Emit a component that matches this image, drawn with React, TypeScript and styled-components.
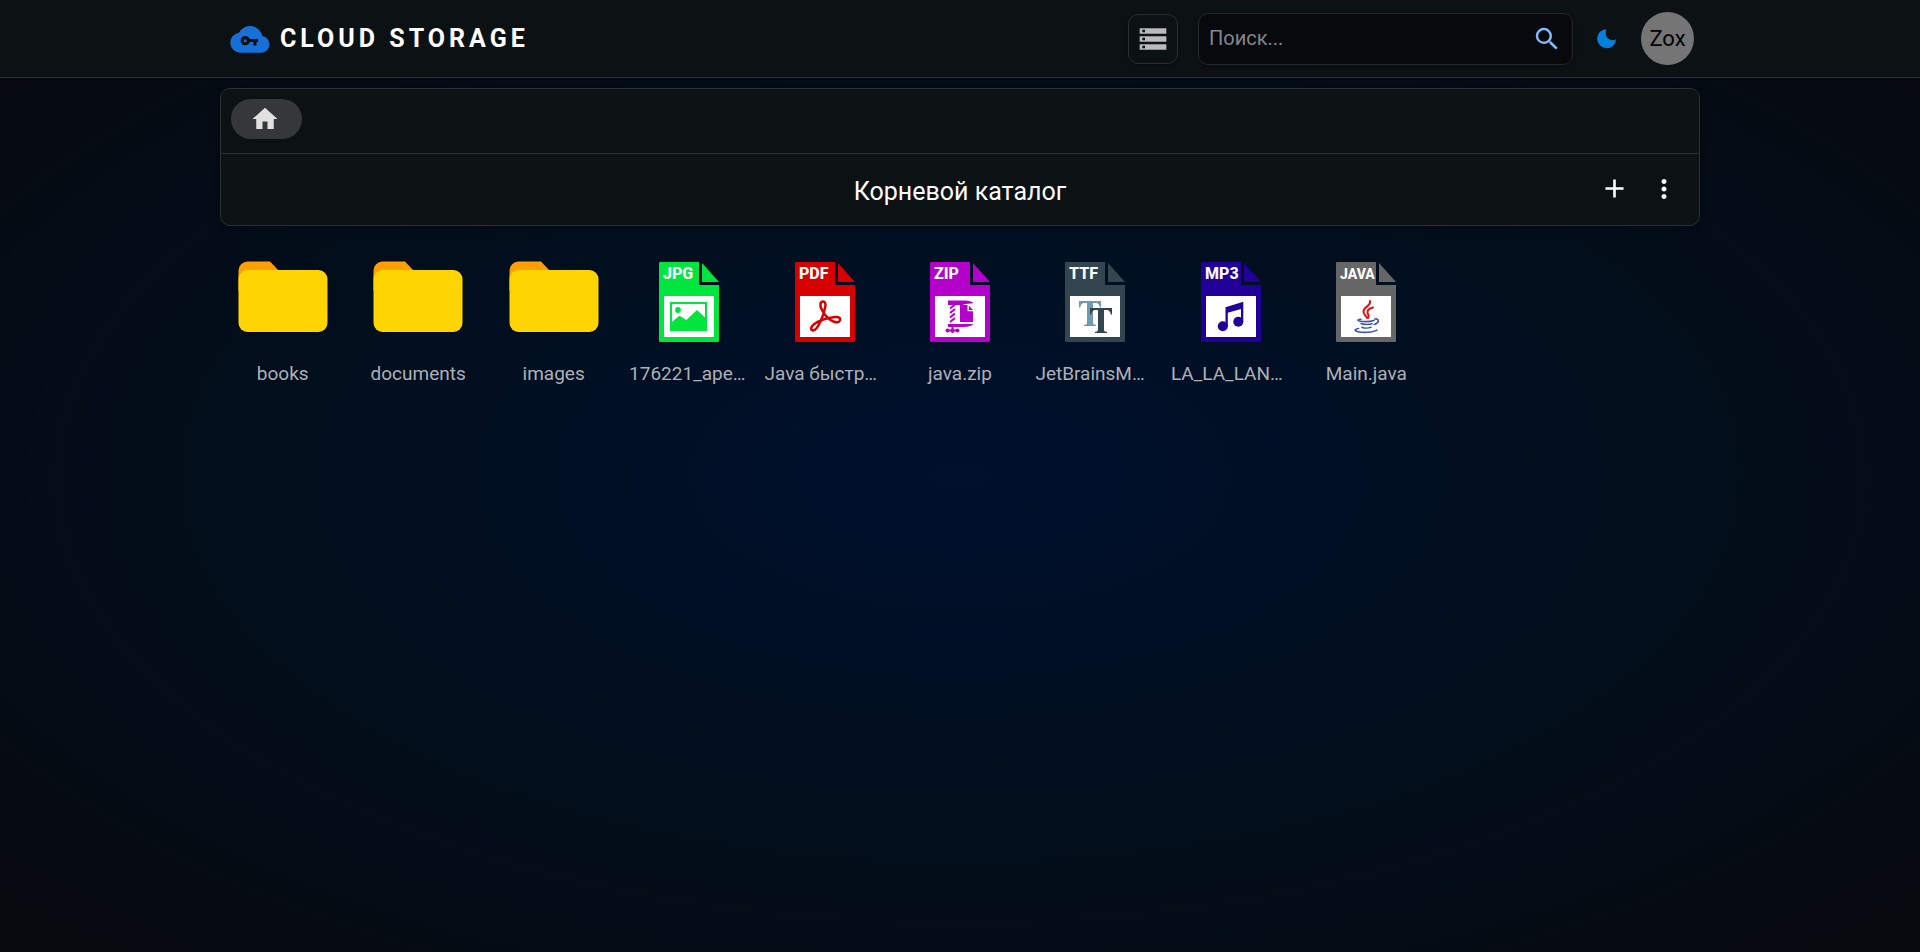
import React from "react";
import styled, { createGlobalStyle } from "styled-components";
import { MdSearch, MdHome, MdAdd, MdMoreVert, MdStorage } from "react-icons/md";

const GlobalStyle = createGlobalStyle`
  * { box-sizing: border-box; }
  body {
    margin: 0;
    min-height: 100vh;
    font-family: Roboto, "Liberation Sans", sans-serif;
    color: #fff;
    background: radial-gradient(ellipse at center, #00102d 0%, #010e1c 50%, #08090e 100%) fixed;
  }
  button { font: inherit; color: inherit; border: 0; padding: 0; background: none; cursor: pointer; }
`;

const Header = styled.header`
  height: 78px;
  border-bottom: 1px solid #2b3034;
  background: #0c1114;
`;

const Container = styled.div`
  width: 100%;
  max-width: 1480px;
  margin: 0 auto;
`;

const HeaderInner = styled(Container)`
  height: 100%;
  display: flex;
  align-items: center;
  justify-content: space-between;
  padding: 0 6px 0 10px;
`;

const Logo = styled.a`
  display: flex;
  align-items: center;
  gap: 10px;
  color: #fff;
  text-decoration: none;
  font-size: 25px;
  font-weight: 700;
  letter-spacing: 4px;
`;

const Tools = styled.div`
  display: flex;
  align-items: center;
  gap: 20px;
`;

const ViewButton = styled.button`
  display: grid;
  place-items: center;
  width: 50px;
  height: 50px;
  border: 1px solid #2a2e31;
  border-radius: 10px;
  color: #b8babb;
  box-shadow: 0 1px 3px rgba(0, 0, 0, 0.4);
`;

const SearchBox = styled.form`
  display: flex;
  align-items: center;
  width: 375px;
  height: 52px;
  padding: 0 10px;
  border: 1px solid #25292c;
  border-radius: 10px;
  background: #08090d;
  box-shadow: 0 1px 4px rgba(0, 0, 0, 0.4);
`;

const SearchInput = styled.input`
  flex: 1;
  min-width: 0;
  padding: 0 0 2px;
  border: 0;
  outline: 0;
  background: none;
  color: #fff;
  font: 20px/24px Roboto, sans-serif;
  &::placeholder { color: #85868a; opacity: 1; }
`;

const IconButton = styled.button<{ $color?: string; $size?: number }>`
  display: grid;
  place-items: center;
  width: ${(p) => p.$size ?? 30}px;
  height: ${(p) => p.$size ?? 30}px;
  color: ${(p) => p.$color ?? "#fff"};
`;

const Account = styled.div`
  display: flex;
  align-items: center;
  gap: 20px;
`;

const Avatar = styled.button`
  width: 53px;
  height: 53px;
  border-radius: 50%;
  background: #757575;
  color: #000;
  font-size: 22px;
`;

const Main = styled(Container).attrs({ as: "main" })`
  padding-top: 10px;
`;

const Panel = styled.section`
  border: 1px solid #2b3034;
  border-radius: 10px;
  background: #0c1114;
  box-shadow: 0 2px 6px rgba(0, 0, 0, 0.4);
`;

const Crumbs = styled.nav`
  height: 65px;
  padding: 10px;
  border-bottom: 1px solid #2b3034;
`;

const HomeChip = styled.button`
  display: flex;
  align-items: center;
  width: 71px;
  height: 40px;
  padding-left: 19px;
  border-radius: 20px;
  background: #34383b;
  color: #e1e1e2;
`;

const TitleBar = styled.div`
  display: grid;
  grid-template-columns: 1fr auto 1fr;
  align-items: center;
  height: 71px;
  padding: 0 10px;
`;

const Title = styled.h1`
  grid-column: 2;
  margin: 0;
  padding-top: 4px;
  font-size: 25px;
  line-height: 32px;
  font-weight: 400;
`;

const Actions = styled.div`
  display: flex;
  justify-content: flex-end;
  padding-bottom: 2px;
`;

const Files = styled.ul`
  display: grid;
  grid-template-columns: repeat(auto-fill, minmax(120px, 1fr));
  gap: 20px 10px;
  margin: 0;
  padding: 20px 0 0;
  list-style: none;
`;

const FileButton = styled.button`
  display: flex;
  flex-direction: column;
  align-items: center;
  width: 100%;
`;

const Thumb = styled.span`
  display: grid;
  place-items: center;
  height: 112px;
`;

const FileName = styled.span<{ $shortened: boolean }>`
  width: 120px;
  padding-top: 4px;
  overflow: hidden;
  white-space: nowrap;
  text-overflow: ellipsis;
  text-align: ${(p) => (p.$shortened ? "left" : "center")};
  font-size: 19px;
  line-height: 24px;
  color: #adb1b7;
`;

const CloudKey = () => (
  <svg width="40" height="40" viewBox="0 0 40 40" aria-hidden="true">
    <path fill="#1670d8" d="M32.3 17.1A12.5 12.5 0 0 0 8.9 13.8 10 10 0 0 0 10 33.7h21.600a8.350 8.350 0 0 0 .7-16.600z" />
    <path fill="#0c1114" fillRule="evenodd" d="M15.3 17.1a4.6 4.6 0 1 0 4.4 6h3.6v3.4h3.2v-3.4h1.6v-3.1h-8.4a4.6 4.6 0 0 0-4.4-2.9zm0 3.1a1.5 1.5 0 1 1 0 3 1.5 1.5 0 0 1 0-3z" />
  </svg>
);

const Moon = () => (
  <svg width="20" height="20" viewBox="0 0 20 20" aria-hidden="true">
    <path fill="#0380dc" d="M9.400 .2A9.500 9.500 0 1 0 19.100 10.200C17 12 12.500 11.500 10.300 8.800 8.500 6.500 8.200 3 9.400 .2z" />
  </svg>
);

const Folder = () => (
  <svg width="90" height="82" viewBox="0 0 90 82" aria-hidden="true">
    <path fill="#ffa000" d="M.5 30V9.500a9 9 0 0 1 9-9H32L41 10v20z" />
    <rect x=".5" y="9" width="89" height="62" rx="9" fill="#ffd400" />
  </svg>
);

type Kind = "jpg" | "pdf" | "zip" | "ttf" | "mp3" | "java";

const COLORS: Record<Kind, string> = {
  jpg: "#00e53d",
  pdf: "#d60000",
  zip: "#b500cc",
  ttf: "#33454e",
  mp3: "#210099",
  java: "#666",
};

const glyphs: Record<Kind, React.ReactNode> = {
  jpg: (
    <g fill="#00e53d">
      <path fillRule="evenodd" d="M11 40h37v29H11zM13 42V60l7.400-6.200 7 4.200L38 48l8 7.600V42z" />
      <circle cx="19" cy="48" r="2.900" />
    </g>
  ),
  pdf: (
    <path
      fill="none" stroke="#d60000" strokeWidth="2.500" strokeLinejoin="round"
      d="M28 39.500c-3 0-3.200 4-1.500 7.500 2.500 5 6 10.500 12.500 12.800 4 1.400 6.500-.5 6.200-2.600-.3-2.400-4.500-2.600-8.500-1.800-6.500 1-13 3.200-17.700 6.800-3.500 2.700-3.500 5.800-1.200 6.200 2.800.5 5.500-4 8-9.600 2.300-5 4-10.300 4.600-14.500.4-3-.6-4.800-2.400-4.800z"
    />
  ),
  zip: (
    <g fill="#b500cc">
      <path d="M18 38.500h17c4 0 7 1 8.500 2.800-4 .2-8 .8-11 1.700H18zM18 62h14c3.500 0 8-.2 11.500.3C41 64 38 65 34 65H18z" />
      <path d="M30 43h7.500v6.300h5.500V60H30z" />
      <path d="M38.800 43.500l4.200 4.600h-4.200z" />
      <path stroke="#b500cc" strokeWidth="2" fill="none" d="M20 46.500l5-4M20 51l5-4M20 55.500l5-4M20 60l5-4M22.500 62v9M17 68.500h11" />
      <circle cx="17.500" cy="68.500" r="2" /><circle cx="22.500" cy="68.500" r="2" /><circle cx="27.500" cy="68.500" r="2" />
    </g>
  ),
  ttf: (
    <>
      <path fill="#6f9bb0" d="M14 39h22v6.500h-1.200c-.5-3-1.700-4.500-4-4.500H28v19.500c0 1.600.8 2.300 3 2.300v1.200H19v-1.200c2.200 0 3-.7 3-2.300V41h-2.800c-2.300 0-3.500 1.500-4 4.500H14z" />
      <path fill="#33454e" d="M25 46h22v6.500h-1.200c-.5-3-1.700-4.500-4-4.500H39v19.500c0 1.600.8 2.300 3 2.300V71H30v-1.200c2.200 0 3-.7 3-2.300V48h-2.800c-2.300 0-3.500 1.500-4 4.500H25z" />
    </>
  ),
  mp3: (
    <g fill="#210099">
      <path d="M24.500 45.200L42.300 39.800V60H40V47l-13.200 3.800V65h-2.300z" />
      <circle cx="21.800" cy="64.200" r="5" /><circle cx="37.300" cy="59.800" r="5" />
    </g>
  ),
  java: (
    <g fill="none" strokeLinecap="round">
      <path stroke="#e01010" strokeWidth="2" d="M34 39c1.500 5-7 6-6.500 11 .2 2.500 2.500 3.500 3.500 6M37 45.500c-3.500 1-5.800 3-5.500 5.200.2 1.800 2 2.500.8 5" />
      <path stroke="#3a55b0" strokeWidth="1.600" d="M25 57.300c-3 0-4.500 1.400-1 1.900 4 .5 10 .5 14-.8M39 57c4.500-.8 4.500 4-.8 5.500M25 61.500c2.500 1.200 8 1.200 11 .2M26 65.300c2 1 6.500 1 9 0M22.500 66.500c-5.500 1-4 3.200 3 3.700 6 .5 13.500-.5 15.500-2" />
    </g>
  ),
};

const TypeLabel = styled.text<{ $long: boolean }>`
  fill: #fff;
  font-family: Roboto, sans-serif;
  font-weight: 800;
  font-size: ${(p) => (p.$long ? 14 : 16)}px;
`;

const FileIcon = ({ kind }: { kind: Kind }) => (
  <svg width="60" height="80" viewBox="0 0 60 80" aria-hidden="true">
    <path fill={COLORS[kind]} d="M1 0h39v22a1 1 0 0 0 1 1h19v56a1 1 0 0 1-1 1H1a1 1 0 0 1-1-1V1a1 1 0 0 1 1-1zM43 1l17 19H43z" />
    <path fill="#fff" d="M5 34h50v41H5z" />
    <TypeLabel x="4" y="17" $long={kind.length > 3}>{kind.toUpperCase()}</TypeLabel>
    {glyphs[kind]}
  </svg>
);

const files: { name: string; kind?: Kind }[] = [
  { name: "books" },
  { name: "documents" },
  { name: "images" },
  { name: "176221_ape…", kind: "jpg" },
  { name: "Java быстр…", kind: "pdf" },
  { name: "java.zip", kind: "zip" },
  { name: "JetBrainsM…", kind: "ttf" },
  { name: "LA_LA_LAN…", kind: "mp3" },
  { name: "Main.java", kind: "java" },
];

export default function App() {
  return (
    <>
      <GlobalStyle />
      <Header>
        <HeaderInner>
          <Logo href="#"><CloudKey />CLOUD STORAGE</Logo>
          <Tools>
            <ViewButton aria-label="Вид списка"><MdStorage size={32} /></ViewButton>
            <SearchBox>
              <SearchInput aria-label="Поиск" placeholder="Поиск..." />
              <IconButton type="submit" aria-label="Найти" $color="#82bdfb"><MdSearch size={30} /></IconButton>
            </SearchBox>
            <Account>
              <IconButton $size={28} aria-label="Тема"><Moon /></IconButton>
              <Avatar>Zox</Avatar>
            </Account>
          </Tools>
        </HeaderInner>
      </Header>
      <Main>
        <Panel>
          <Crumbs aria-label="Путь"><HomeChip aria-label="Домой"><MdHome size={30} /></HomeChip></Crumbs>
          <TitleBar>
            <Title>Корневой каталог</Title>
            <Actions>
              <IconButton $size={50} aria-label="Добавить"><MdAdd size={31} /></IconButton>
              <IconButton $size={50} aria-label="Ещё"><MdMoreVert size={30} /></IconButton>
            </Actions>
          </TitleBar>
        </Panel>
        <Files>
          {files.map((f) => (
            <li key={f.name}>
              <FileButton>
                <Thumb>{f.kind ? <FileIcon kind={f.kind} /> : <Folder />}</Thumb>
                <FileName $shortened={f.name.endsWith("…")}>{f.name}</FileName>
              </FileButton>
            </li>
          ))}
        </Files>
      </Main>
    </>
  );
}
